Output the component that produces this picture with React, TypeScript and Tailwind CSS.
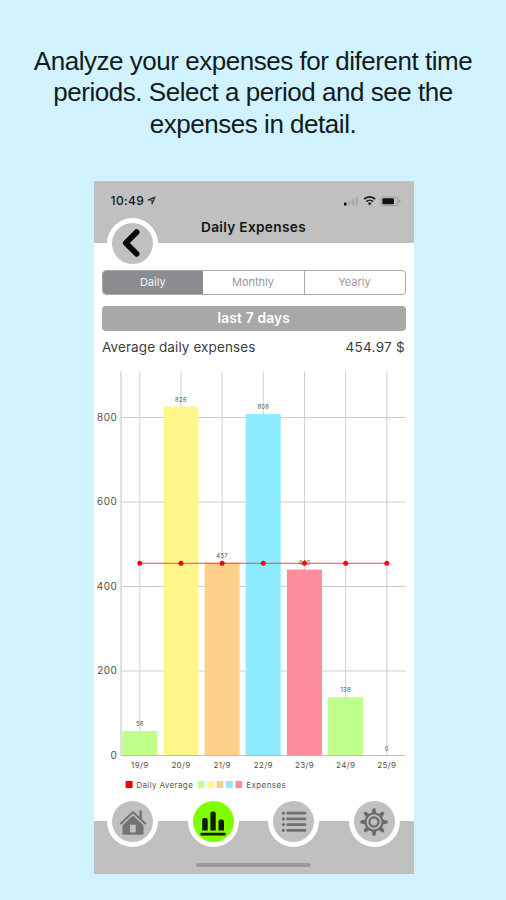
import type { ReactNode } from "react";

const days = [
  { label: "19/9", value: 58, text: "58", color: "#bfff8c" },
  { label: "20/9", value: 826, text: "826", color: "#fff78c" },
  { label: "21/9", value: 457, text: "457", color: "#ffd08c" },
  { label: "22/9", value: 808, text: "808", color: "#8cebff" },
  { label: "23/9", value: 440, text: "440", color: "#ff8c9d" },
  { label: "24/9", value: 138, text: "138", color: "#bfff8c" },
  { label: "25/9", value: 0, text: "0", color: "#8cebff" },
];

const average = 454.97;
const baseY = 390.5;
const yOf = (v: number) => baseY - v * 0.4225;
const xOf = (i: number) => 45.8 + i * 41.17;

function Chart() {
  return (
    <svg width="320" height="430" viewBox="0 0 320 430" className="block font-['Inter',sans-serif]">
      {[200, 400, 600, 800].map((v) => (
        <line key={v} x1="27" x2="311" y1={yOf(v)} y2={yOf(v)} stroke="#cccccc" />
      ))}
      {days.map((d, i) => (
        <line key={d.label} x1={xOf(i)} x2={xOf(i)} y1="6.5" y2={baseY} stroke="#d0d0d0" />
      ))}
      <line x1="27" x2="27" y1="6.5" y2={baseY} stroke="#c0c0c0" />
      {days.map((d, i) => (
        <rect key={d.label} x={xOf(i) - 17.6} y={yOf(d.value)} width="35" height={baseY - yOf(d.value)} fill={d.color} />
      ))}
      <line x1="27" x2="311" y1={baseY} y2={baseY} stroke="#bdbdbd" />
      {[0, 200, 400, 600, 800].map((v) => (
        <text key={v} x="23.4" y={yOf(v) + 3} textAnchor="end" fontSize="10" letterSpacing="0.5" fill="#505050">{v}</text>
      ))}
      {days.map((d, i) => (
        <g key={d.label} textAnchor="middle" fill="#505050">
          <text x={xOf(i)} y={yOf(d.value) - 4.7} fontSize="6" letterSpacing="0.2">{d.text}</text>
          <text x={xOf(i)} y="402.6" fontSize="8" letterSpacing="0.35">{d.label}</text>
        </g>
      ))}
      <line x1={xOf(0)} x2={xOf(6)} y1={yOf(average)} y2={yOf(average)} stroke="#f04a4a" />
      {days.map((d, i) => (
        <circle key={d.label} cx={xOf(i)} cy={yOf(average)} r="2.5" fill="#f20a0a" />
      ))}
      <rect x="31.6" y="416" width="7" height="7" fill="#f00000" />
      <text x="42.3" y="422.5" fontSize="8" textLength="56.5" fill="#555">Daily Average</text>
      {["#bfff8c", "#fff78c", "#ffd08c", "#8cebff", "#ff8c9d"].map((c, i) => (
        <rect key={c} x={103.8 + i * 9.4} y="416" width="6.8" height="7" fill={c} />
      ))}
      <text x="152.3" y="422.5" fontSize="8" textLength="39.5" fill="#555">Expenses</text>
    </svg>
  );
}

function RoundButton({ active = false, children }: { active?: boolean; children: ReactNode }) {
  return (
    <div className="flex size-[51px] items-center justify-center rounded-full bg-white">
      <div className={active ? "flex size-[41px] items-center justify-center rounded-full bg-[#80ff00]" : "flex size-[41px] items-center justify-center rounded-full bg-[#c0c0c0]"}>
        {children}
      </div>
    </div>
  );
}

function HomeIcon() {
  return (
    <svg width="28" height="28" viewBox="0 0 28 28">
      <path d="M20.4 9.5V2.4h2.5v9.5Z" fill="#737373" />
      <path d="M1.8 15.4 14 4 26.2 15.4" fill="none" stroke="#737373" strokeWidth="2" strokeLinecap="round" />
      <path d="M3.5 17.2 14 7.6l10.5 9.6v8.9q0 .6-.6.6H4.1q-.6 0-.6-.6Z" fill="#737373" />
      <path d="M11 16.8h5.8v7.6H11z" fill="#c0c0c0" />
    </svg>
  );
}

function BarsIcon() {
  return (
    <svg width="28" height="28" viewBox="0 0 28 28" fill="#101808">
      <path d="M3.2 22.6V12q0-2 2-2h1.5q2 0 2 2v10.6Z" />
      <path d="M11.4 22.6V5.4q0-2 2-2h1.3q2 0 2 2v17.2Z" />
      <path d="M19.5 22.6v-9q0-2 2-2H23q2 0 2 2v9Z" />
      <rect x="1.6" y="24.8" width="25" height="2.7" rx="0.4" />
    </svg>
  );
}

function ListIcon() {
  return (
    <svg width="26" height="24" viewBox="0 0 26 24" fill="#707070">
      {[1.8, 7.5, 13.2, 18.9].map((y) => (
        <g key={y}>
          <circle cx="2.4" cy={y + 1.4} r="1.6" />
          <rect x="5.4" y={y} width="19.8" height="2.8" rx="0.8" />
        </g>
      ))}
    </svg>
  );
}

function GearIcon() {
  return (
    <svg width="28" height="28" viewBox="-14 -14 28 28" fill="none" stroke="#6c6c6c">
      {[0, 45, 90, 135, 180, 225, 270, 315].map((a) => (
        <path key={a} d="M-2.5 -8.4 -1.5 -13Q-1.4-13.7-.7-13.7H.7Q1.4-13.7 1.5-13L2.5 -8.4Z" transform={`rotate(${a})`} fill="#6c6c6c" stroke="none" />
      ))}
      <circle r="8.5" strokeWidth="2.2" fill="#c0c0c0" />
      <circle r="4.6" strokeWidth="2.2" />
    </svg>
  );
}

export default function App() {
  return (
    <main className="flex h-[900px] w-[506px] flex-col overflow-hidden bg-[#d1f3ff] font-['Inter',sans-serif]">
      <h1 className="h-[181px] pt-[45.5px] text-center font-['Liberation_Sans',Arial,sans-serif] text-[26px] leading-[31.5px] tracking-[-0.47px] text-[#101c20]">
        Analyze your expenses for diferent time<br />periods. Select a period and see the<br />expenses in detail.
      </h1>

      <section className="ml-[93.5px] flex h-[693px] w-[320px] flex-col bg-white">
        <header className="h-[62px] bg-[#c0c0c0]">
          <div className="flex h-[37px] items-center pt-[2px] pr-[12px] pl-[17px]">
            <span className="text-[12px] font-medium tracking-[0.4px] text-[#161616]">10:49</span>
            <svg width="9" height="9" viewBox="0 0 9 9" className="ml-[3px]" fill="none" stroke="#333" strokeWidth="1.2" strokeLinejoin="round">
              <path d="M1 4 8 1 5 8V4Z" />
            </svg>
            <svg width="59" height="12" viewBox="0 0 59 12" className="ml-auto">
              <rect x="1" y="7.5" width="2.6" height="3" rx="0.6" fill="#111" />
              <rect x="5" y="6" width="2.3" height="4.5" fill="#aaa" />
              <rect x="8.8" y="4" width="2.3" height="6.5" fill="#aaa" />
              <rect x="12.6" y="2" width="2.3" height="8.5" fill="#aaa" />
              <g fill="none" stroke="#151515" strokeWidth="1.7">
                <path d="M21.2 4.2a7.7 7.7 0 0 1 11 0" />
                <path d="M23.4 6.6a4.7 4.7 0 0 1 6.6 0" />
              </g>
              <path d="m24.9 8.2 1.8 2.2 1.8-2.2a2.6 2.6 0 0 0-3.6 0Z" fill="#151515" />
              <rect x="38" y="2" width="16.8" height="8.6" rx="2.4" fill="none" stroke="#999" />
              <rect x="39.4" y="3.3" width="11.6" height="6" rx="1" fill="#111" />
              <path d="M56 4.5v3.6q1.5-.5 1.5-1.8T56 4.5Z" fill="#999" />
            </svg>
          </div>
          <h2 className="text-center text-[13.7px] leading-[18px] font-semibold tracking-[0.3px] text-[#151515]">Daily Expenses</h2>
        </header>

        <div className="relative z-10 -mt-[25.5px] ml-[13.7px] h-[51px] w-[51px]">
          <RoundButton>
            <svg width="28" height="30" viewBox="0 0 28 30" className="-ml-[4px]" fill="none" stroke="#080808" strokeWidth="5.8" strokeLinecap="round" strokeLinejoin="round">
              <path d="M19.6 4.2 8.8 15l10.8 10.8" />
            </svg>
          </RoundButton>
        </div>

        <div className="relative z-20 mt-[1px] ml-[8.5px] grid h-[25.5px] w-[303.5px] grid-cols-[99.5px_101px_1fr] overflow-hidden rounded-[4px] border border-[#aaa] bg-white text-center text-[11px] leading-[23.5px] text-[#999]">
          <div className="bg-[#8b8c90] text-[#f4f4f4]">Daily</div>
          <div>Monthly</div>
          <div className="border-l border-[#aaa]">Yearly</div>
        </div>

        <div className="mt-[10.5px] ml-[8.5px] h-[25.5px] w-[303.5px] rounded-[4px] bg-[#a8a8a8] text-center text-[13.8px] leading-[25px] font-semibold tracking-[0.15px] text-white">
          last 7 days
        </div>

        <div className="flex h-[34px] justify-between pr-[8.5px] pl-[8.5px] text-[13.5px] leading-[32px] tracking-[0.1px] text-[#3c3c3c]">
          <span>Average daily expenses</span>
          <span className="tracking-[0.28px]">454.97 $</span>
        </div>

        <Chart />

        <footer className="-mt-px flex grow flex-col">
          <nav className="relative flex h-[53px] shrink-0 justify-between bg-[linear-gradient(to_bottom,white_27px,#c0c0c0_27px)] pt-[2px] pr-[13.5px] pl-[13.5px]">
            <RoundButton><HomeIcon /></RoundButton>
            <RoundButton active><BarsIcon /></RoundButton>
            <RoundButton><ListIcon /></RoundButton>
            <RoundButton><GearIcon /></RoundButton>
          </nav>
          <div className="flex grow justify-center bg-[#c0c0c0] pt-[16px]">
            <div className="h-[4px] w-[115px] rounded-full bg-[#9b9b9b]" />
          </div>
        </footer>
      </section>
    </main>
  );
}
